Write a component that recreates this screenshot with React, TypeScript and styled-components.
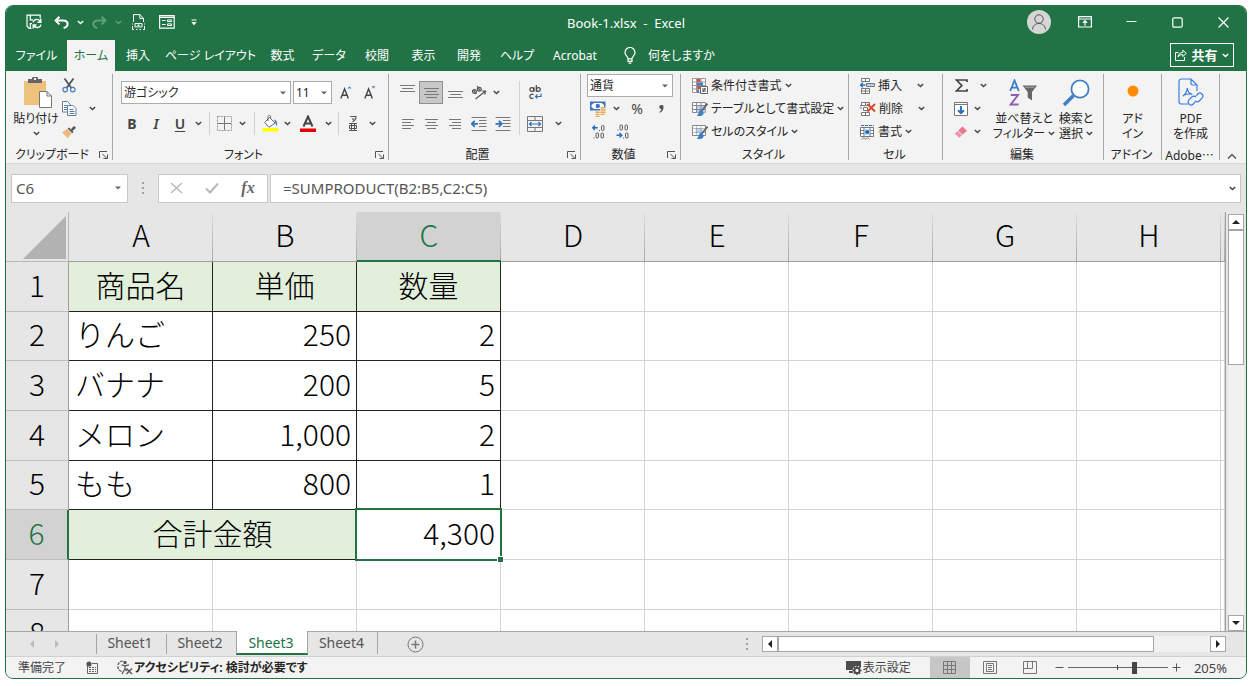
import React from "react";
import styled, { createGlobalStyle, css } from "styled-components";

const GREEN = "#217346";
const UI_FONT = '"Noto Sans", "Noto Sans CJK JP", sans-serif';
const CELL_FONT = '"Noto Sans CJK JP", sans-serif';

const GlobalStyle = createGlobalStyle`
  *, *::before, *::after { box-sizing: border-box; }
  body {
    margin: 0;
    background: #fff;
    color: #262626;
    font-family: ${UI_FONT};
    font-size: 12px;
    line-height: 16px;
    font-feature-settings: "palt";
  }
  button, input, select {
    margin: 0;
    padding: 0;
    border: 0;
    border-radius: 0;
    background: none;
    color: inherit;
    font: inherit;
    font-feature-settings: inherit;
  }
  svg { display: block; flex: none; }
`;

/* ---------- window frame ---------- */

const Page = styled.div`
  height: 100vh;
  padding: 5px 5px 7px;
`;

const Window = styled.div`
  display: flex;
  flex-direction: column;
  height: 100%;
  overflow: hidden;
  border: 1px solid ${GREEN};
  border-radius: 8px;
  background: #e6e6e6;
`;

const TitleBar = styled.header`
  display: grid;
  grid-template-columns: 1fr auto 1fr;
  align-items: center;
  height: 34px;
  background: ${GREEN};
  color: #fff;
`;

const QuickAccess = styled.div`
  display: flex;
  align-items: center;
  padding-left: 16px;
  padding-bottom: 2px;
`;

const TitleText = styled.h1`
  margin: 0;
  font-size: 13px;
  font-weight: 400;
  line-height: 16px;
  white-space: pre;
`;

const WindowControls = styled.div`
  display: flex;
  align-items: center;
  justify-content: flex-end;
  padding-bottom: 2px;
`;

const IconButton = styled.button<{ $w?: number; $h?: number; $on?: boolean; $dim?: boolean }>`
  display: flex;
  align-items: center;
  justify-content: center;
  flex: none;
  width: ${(p) => p.$w ?? 24}px;
  height: ${(p) => p.$h ?? 23}px;
  opacity: ${(p) => (p.$dim ? 0.3 : 1)};
  ${(p) =>
    p.$on &&
    css`
      border: 1px solid #8f8f8f;
      background: #c8c8c8;
    `}
`;

const Avatar = styled.span`
  display: grid;
  place-items: center;
  width: 24px;
  height: 24px;
  border-radius: 50%;
  background: #d6d6d6;
`;

/* ---------- tab strip ---------- */

const TabStrip = styled.nav`
  display: flex;
  align-items: stretch;
  height: 31px;
  background: ${GREEN};
  color: #fff;
`;

const RibbonTab = styled.button<{ $w: number; $active?: boolean }>`
  flex: none;
  display: flex;
  justify-content: center;
  align-items: center;
  width: ${(p) => p.$w}px;
  white-space: nowrap;
  ${(p) =>
    p.$active &&
    css`
      background: #f3f3f3;
      color: ${GREEN};
    `}
`;

const TellMe = styled.button`
  display: flex;
  align-items: center;
  gap: 12px;
  padding-left: 16px;
  white-space: nowrap;
`;

const ShareButton = styled.button`
  display: flex;
  align-items: center;
  justify-content: center;
  gap: 4px;
  width: 64px;
  height: 24px;
  margin: 3px 12px 0 auto;
  border: 1px solid #fff;
  font-size: 13px;
  font-weight: 700;
`;

/* ---------- ribbon ---------- */

const Ribbon = styled.section`
  display: flex;
  align-items: flex-start;
  height: 93px;
  padding-top: 3px;
  background: #f3f3f3;
  border-bottom: 1px solid #d6d6d6;
`;

const Group = styled.div<{ $w: number }>`
  display: flex;
  flex-direction: column;
  flex: none;
  width: ${(p) => p.$w}px;
  height: 89px;
`;

const GroupDivider = styled.span`
  flex: none;
  width: 1px;
  height: 86px;
  background: #a6a6a6;
`;

const GroupBody = styled.div<{ $pad?: string }>`
  display: flex;
  height: 73px;
  padding: ${(p) => p.$pad ?? "0"};
`;

const GroupLabel = styled.div`
  display: flex;
  align-items: center;
  height: 16px;
  padding-right: 2px;
  white-space: nowrap;
`;

const LabelText = styled.span`
  flex: 1;
  text-align: center;
`;

const Ellipsis = styled.span`
  font-family: ${CELL_FONT};
  font-feature-settings: normal;
`;

const CollapseButton = styled.button`
  align-self: flex-end;
  margin: 0 9px 3px auto;
`;

const Stack = styled.div<{ $gap?: number }>`
  display: flex;
  flex-direction: column;
  gap: ${(p) => p.$gap ?? 0}px;
`;

const Row = styled.div<{ $gap?: number }>`
  display: flex;
  align-items: center;
  gap: ${(p) => p.$gap ?? 0}px;
  height: 23px;
`;

const Rule = styled.span<{ $h?: number; $m?: string }>`
  flex: none;
  width: 1px;
  height: ${(p) => p.$h ?? 23}px;
  margin: ${(p) => p.$m ?? "0"};
  background: #d2d2d2;
`;

const BigButton = styled.button<{ $w: number }>`
  display: flex;
  flex-direction: column;
  align-items: center;
  justify-content: flex-start;
  flex: none;
  width: ${(p) => p.$w}px;
  height: 69px;
  white-space: nowrap;
`;

const BigIcon = styled.span`
  display: grid;
  place-items: center;
  height: 37px;
`;

const BigText = styled.span`
  display: flex;
  align-items: center;
  gap: 3px;
  height: 15px;
  line-height: 15px;
`;

const MenuButton = styled.button`
  display: flex;
  align-items: center;
  gap: 3px;
  height: 23px;
  white-space: nowrap;
`;

const MenuText = styled.span<{ $w?: number }>`
  min-width: ${(p) => p.$w ?? 0}px;
  text-align: left;
`;

const Glyph = styled.span<{ $weight?: number; $italic?: boolean; $underline?: boolean }>`
  color: #444;
  font-size: 14px;
  font-weight: ${(p) => p.$weight ?? 400};
  font-style: ${(p) => (p.$italic ? "italic" : "normal")};
  text-decoration: ${(p) => (p.$underline ? "underline" : "none")};
  text-underline-offset: 2px;
`;

const SelectBox = styled.div<{ $w: number }>`
  display: grid;
  flex: none;
  align-items: center;
  width: ${(p) => p.$w}px;
  height: 23px;
  border: 1px solid #ababab;
  background: #fff;

  & > * { grid-area: 1 / 1; }
  & > select {
    appearance: none;
    width: 100%;
    height: 21px;
    padding-left: 2px;
    outline: 0;
  }
  & > svg {
    justify-self: end;
    margin-right: 4px;
    pointer-events: none;
  }
`;

/* ---------- formula bar ---------- */

const FormulaBar = styled.section`
  display: flex;
  align-items: center;
  height: 48px;
  padding: 0 5px;
  color: #555;
`;

const FieldBox = styled.div<{ $w?: number }>`
  display: flex;
  align-items: center;
  flex: ${(p) => (p.$w ? "none" : "1")};
  width: ${(p) => (p.$w ? p.$w + "px" : "auto")};
  height: 29px;
  border: 1px solid #c8c8c8;
  background: #fff;
`;

const FormulaField = styled(FieldBox)`
  margin-left: 2px;
`;

const FieldInput = styled.input<{ $pad: number }>`
  flex: 1;
  min-width: 0;
  height: 27px;
  padding-left: ${(p) => p.$pad}px;
  outline: 0;
  font-size: 15px;
`;

const Grip = styled.span`
  flex: none;
  width: 2px;
  height: 12px;
  margin: 0 14px;
  background: repeating-linear-gradient(#a0a0a0 0 2px, transparent 2px 5px);
`;

/* ---------- sheet ---------- */

const Workspace = styled.main`
  display: flex;
  flex: 1;
  min-height: 0;
`;

const SheetView = styled.div`
  flex: 1;
  min-width: 0;
  overflow: hidden;
  border-right: 1px solid #a0a0a0;
  background: #fff;
`;

const Grid = styled.table`
  width: 100%;
  table-layout: fixed;
  border-collapse: separate;
  border-spacing: 0;
  font-family: ${CELL_FONT};
  font-size: 30px;
  font-weight: 300;
  line-height: 30px;
  font-feature-settings: normal;
  color: #000;

  tr { height: 50px; }
  tbody tr:nth-child(3n + 2) { height: 49px; }
`;

const RowHeadCol = styled.col`
  width: 63px;
`;

const DataCol = styled.col`
  width: 144px;
`;

const ColHead = styled.th<{ $active?: boolean }>`
  padding: 0 0 ${(p) => (p.$active ? 5 : 6)}px;
  font-weight: 300;
  border-bottom: ${(p) => (p.$active ? `2px solid ${GREEN}` : "1px solid #9e9e9e")};
  background: linear-gradient(#dcdcdc, #a8a8a8) right / 1px 100% no-repeat ${(p) => (p.$active ? "#d2d2d2" : "#e6e6e6")};
  color: ${(p) => (p.$active ? GREEN : "#000")};
`;

const Corner = styled.td`
  padding: 0 2px 2px 0;
  vertical-align: bottom;
  border-bottom: 1px solid #b8b8b8;
  border-right: 1px solid #b8b8b8;
  background: #e6e6e6;

  & > svg { margin-left: auto; }
`;

const RowHead = styled.th<{ $active?: boolean }>`
  padding: 0 0 6px;
  font-weight: 300;
  border-bottom: 1px solid #bdbdbd;
  border-right: ${(p) => (p.$active ? `2px solid ${GREEN}` : "1px solid #9e9e9e")};
  background: ${(p) => (p.$active ? "#d2d2d2" : "#e6e6e6")};
  color: ${(p) => (p.$active ? GREEN : "#000")};
`;

const Cell = styled.td<{ $kind?: "head" | "data"; $align?: string }>`
  position: relative;
  padding: ${(p) => (p.$align === "center" ? "0 0 6px" : "0 5px 6px 6px")};
  text-align: ${(p) => p.$align ?? "left"};
  white-space: nowrap;
  border-right: 1px solid ${(p) => (p.$kind ? "#222" : "#d4d4d4")};
  border-bottom: 1px solid ${(p) => (p.$kind ? "#222" : "#d4d4d4")};
  background: ${(p) => (p.$kind === "head" ? "#e2efda" : "#fff")};
`;

const Selection = styled.span`
  position: absolute;
  z-index: 1;
  inset: -2px;
  border: 2px solid ${GREEN};
  pointer-events: none;

  &::after {
    content: "";
    position: absolute;
    right: -3px;
    bottom: -3px;
    width: 6px;
    height: 6px;
    border: 1px solid #fff;
    border-width: 1px 0 0 1px;
    background: ${GREEN};
  }
`;

const VScroll = styled.div`
  display: flex;
  flex-direction: column;
  flex: none;
  width: 16px;
  margin: 2px 2px 0;
`;

const HScroll = styled.div`
  display: flex;
  width: 38%;
  height: 16px;
`;

const ScrollTrack = styled.div`
  display: flex;
  flex-direction: inherit;
  flex: 1;
  background: #f1f1f1;
`;

const ScrollThumb = styled.div<{ $size: string }>`
  flex: 0 0 ${(p) => p.$size};
  border: 1px solid #a6a6a6;
  background: #fff;
`;

const ScrollButton = styled.button`
  display: grid;
  place-items: center;
  flex: none;
  width: 16px;
  height: 16px;
  border: 1px solid #a6a6a6;
  background: #fff;
`;

/* ---------- sheet tabs ---------- */

const SheetBar = styled.nav`
  display: flex;
  align-items: center;
  height: 26px;
  padding-right: 20px;
  border-top: 1px solid #a6a6a6;
  border-bottom: 1px solid #d0d0d0;
`;

const SheetNav = styled.div`
  display: flex;
  width: 90px;
  padding-left: 13px;
`;

const SheetTabs = styled.div`
  display: flex;
  align-items: flex-start;
  align-self: stretch;
`;

const SheetTab = styled.button<{ $active?: boolean }>`
  width: ${(p) => (p.$active ? 72 : 70)}px;
  height: 22px;
  padding-right: 2px;
  font-size: 14px;
  line-height: 20px;
  color: #555;
  background: linear-gradient(#a6a6a6, #a6a6a6) left 2px / 1px 100% no-repeat;

  &:last-of-type { border-right: 1px solid #a6a6a6; }
  ${(p) =>
    p.$active &&
    css`
      height: 24px;
      margin-top: -1px;
      padding-top: 2px;
      border: 1px solid #a6a6a6;
      border-top: 0;
      border-bottom: 2px solid ${GREEN};
      background: #fff;
      color: ${GREEN};
      & + button { background: none; }
    `}
`;

const AddSheet = styled.button`
  margin: 0 auto 0 29px;
`;

/* ---------- status bar ---------- */

const StatusBar = styled.footer`
  display: flex;
  align-items: center;
  height: 21px;
  padding: 0 19px 0 12px;
  background: #f3f3f3;
  color: #444;
  white-space: nowrap;
`;

const StatusItem = styled.button<{ $m?: string; $bold?: boolean }>`
  display: flex;
  align-items: center;
  gap: 1px;
  margin: ${(p) => p.$m ?? "0"};
  font-weight: ${(p) => (p.$bold ? 700 : 400)};
  color: ${(p) => (p.$bold ? "#262626" : "inherit")};
`;

const ViewButton = styled.button<{ $active?: boolean }>`
  display: grid;
  place-items: center;
  width: 40px;
  height: 21px;
  background: ${(p) => (p.$active ? "#c6c6c6" : "none")};
`;

const ZoomRange = styled.input`
  appearance: none;
  width: 100px;
  height: 15px;
  outline: 0;
  background:
    linear-gradient(#444, #444) 49px center / 1px 5px no-repeat,
    linear-gradient(#666, #666) center / 100% 1px no-repeat;

  &::-webkit-slider-thumb {
    appearance: none;
    width: 5px;
    height: 12px;
    background: #444;
  }
`;

const ZoomValue = styled.span`
  font-size: 13px;
`;

/* ---------- small drawings ---------- */

const Chevron = ({ color = "#444" }: { color?: string }) => (
  <svg width="7" height="5" viewBox="0 0 7 5" fill="none" stroke={color} strokeWidth="1.4">
    <path d="M0.8 0.9 3.5 3.6 6.2 0.9" />
  </svg>
);

const Caret = () => (
  <svg width="6" height="4" viewBox="0 0 6 4">
    <path d="M0 0.5h6L3 3.5z" fill="#666" />
  </svg>
);

const Drop = ({ w = 16, label, white, dim }: { w?: number; label: string; white?: boolean; dim?: boolean }) => (
  <IconButton $w={w} $dim={dim} aria-label={label}>
    <Chevron color={white ? "#fff" : "#444"} />
  </IconButton>
);

const Launcher = ({ label }: { label: string }) => (
  <IconButton $w={12} $h={12} aria-label={label}>
    <svg width="10" height="10" viewBox="0 0 10 10" fill="none" stroke="#555">
      <path d="M0.5 8V1.5H8M3.5 4 8 8.5M8.5 4.5v4h-4" />
    </svg>
  </IconButton>
);

const SaveIcon = () => (
  <svg width="16" height="16" viewBox="0 0 16 16" fill="none" stroke="#fff" strokeWidth="1.2">
    <path d="M5.5 14.4H3.2L1 12.2V1.2h13.2v3.2M4.3 1.4v4.4H7M4.3 14V9.6H6" />
    <path d="M7 8.2a4 4 0 0 1 7.4-.6M14.8 4.8v3.4h-3.4M15 10.6a4 4 0 0 1-7.4.8M7.2 14.4V11h3.3" strokeWidth="1.4" />
  </svg>
);

const UndoIcon = ({ flip }: { flip?: boolean }) => (
  <svg width="15" height="13" viewBox="0 0 15 13" fill="none" stroke="#fff" strokeWidth="2">
    <g transform={flip ? "translate(15 0) scale(-1 1)" : undefined}>
      <path d="M5.4 0.8 1.6 4.6l3.8 3.8M1.8 4.6H9c2.8 0 4.6 1.5 4.6 3.5 0 2-1.6 3.5-4 3.8" />
    </g>
  </svg>
);

const PrintDocIcon = () => (
  <svg width="13" height="16" viewBox="0 0 13 16" fill="none" stroke="#fff">
    <path d="M1.5 8V0.6h6.4l3.6 3.6V8M7.8 0.8v3.6h3.6" />
    <path d="M0.5 9.5v1M0.5 12v3.5H2M12.5 9.5v1M12.5 12v3.5H11M4 15.5h1.5M7.5 15.5H9" />
    <path d="M3 9.5h7v3.4H3z" />
    <path d="M5.5 11.2h2" strokeWidth="1.6" />
  </svg>
);

const FormIcon = () => (
  <svg width="16" height="14" viewBox="0 0 16 14" fill="none" stroke="#fff">
    <path d="M0.6 0.6h14.6v12.6H0.6zM0.6 2.4h14.6" strokeWidth="1.2" />
    <path d="M3 5.5h3.6M3 9.5h3.6M8.5 4.9h4v1.6h-4zM8.5 8.9h4v1.6h-4z" />
  </svg>
);

const CustomizeIcon = () => (
  <svg width="6" height="7" viewBox="0 0 6 7">
    <path d="M0.5 0.5h5v1h-5zM0.3 3h5.4L3 6.2z" fill="#fff" />
  </svg>
);

const PersonIcon = () => (
  <svg width="16" height="18" viewBox="0 0 16 18" fill="none" stroke="#555">
    <circle cx="8" cy="6" r="4.2" />
    <path d="M1.5 16.5c.4-4 3-6 6.5-6s6.1 2 6.5 6" />
  </svg>
);

const RibbonModeIcon = () => (
  <svg width="14" height="12" viewBox="0 0 14 12" fill="none" stroke="#fff" strokeWidth="1.2">
    <path d="M0.6 0.7h12.8V11H0.6zM0.6 3h12.8M7 9.8V5M4.8 6.8 7 4.6l2.2 2.2" />
  </svg>
);

const MinIcon = () => (
  <svg width="11" height="11" viewBox="0 0 11 11" stroke="#fff">
    <path d="M0.5 4.5h10" />
  </svg>
);

const MaxIcon = () => (
  <svg width="11" height="11" viewBox="0 0 11 11" fill="none" stroke="#fff" strokeWidth="1.2">
    <rect x="0.8" y="0.8" width="9.4" height="9.4" rx="1.2" />
  </svg>
);

const CloseIcon = () => (
  <svg width="11" height="11" viewBox="0 0 11 11" stroke="#fff" strokeWidth="1.2">
    <path d="M0.5 0.5l10 10M10.5 0.5l-10 10" />
  </svg>
);

const BulbIcon = () => (
  <svg width="12" height="17" viewBox="0 0 12 17" fill="none" stroke="#fff" strokeWidth="1.2">
    <path d="M4 11.8C4 9.5 1 8.6 1 5.5a5 5 0 0 1 10 0c0 3.1-3 4-3 6.3zM4 11.8v2.6h4v-2.6M4.6 16.2h2.8" />
  </svg>
);

const ShareIcon = () => (
  <svg width="12" height="12" viewBox="0 0 12 12" fill="none" stroke="#fff">
    <path d="M3.5 3.5h-3v8h9V8" />
    <path d="M3 8c.3-3 2-4.5 4.8-4.5V1.2L11.3 4.4 7.8 7.5V5.6C5.6 5.5 4 6.2 3 8z" />
  </svg>
);

const PasteIcon = () => (
  <svg width="32" height="31" viewBox="0 0 32 31">
    <path d="M4 4h22v24H4z" fill="#edc27c" />
    <path d="M8 2h4a3 3 0 0 1 6 0h4v4H8z" fill="#666" />
    <rect x="14" y="1" width="2" height="2" fill="#f3f3f3" />
    <path d="M19.5 14.5H27l4.5 4.5v11.5h-12zM27 14.5V19h4.5" fill="#fff" stroke="#777" />
  </svg>
);

const CutIcon = () => (
  <svg width="14" height="15" viewBox="0 0 14 15" fill="none">
    <path d="M2.5 0.5 9.4 10M11.5 0.5 4.6 10" stroke="#555" strokeWidth="1.8" />
    <circle cx="3.2" cy="11.6" r="2.3" stroke="#4a7ebb" strokeWidth="1.2" />
    <circle cx="10.8" cy="11.6" r="2.3" stroke="#4a7ebb" strokeWidth="1.2" />
  </svg>
);

const CopyIcon = () => (
  <svg width="15" height="15" viewBox="0 0 15 15" fill="#fff" stroke="#6b7c93">
    <path d="M0.5 0.5h5L8 3v8H0.5z" />
    <path d="M2 4.5h3M2 6.5h3M2 8.5h3" stroke="#4a7ebb" />
    <path d="M5.5 4.5H11L14 7.5v7H5.5z" />
    <path d="M7.5 8.5h4M7.5 10.5h5M7.5 12.5h5" stroke="#4a7ebb" />
  </svg>
);

const BrushIcon = () => (
  <svg width="14" height="12" viewBox="0 0 14 12">
    <path d="M0 6.5 5 3l4.5 4.5L5.8 12z" fill="#edb877" />
    <path d="M5.6 2.6 7 1.4l4.6 4.7-1.4 1.2z" fill="#555" />
    <path d="M8.8 3.2 12 0l2 1.8-3.4 3.2z" fill="#555" />
  </svg>
);

const FontSizeIcon = ({ up }: { up?: boolean }) => (
  <svg width="14" height="15" viewBox="0 0 14 15" fill="none">
    <path d="M1.8 13.5 5.6 4l3.8 9.5M3.2 10.3H8" stroke="#444" strokeWidth="1.4" />
    <path d={up ? "M8.5 3.5 10.5 1.2l2 2.3z" : "M8.5 1.2l2 2.3 2-2.3z"} fill="#4a7ebb" />
  </svg>
);

const BorderIcon = () => (
  <svg width="15" height="15" viewBox="0 0 15 15" fill="none" stroke="#999">
    <path d="M0.5 0.5h14v14H0.5z" strokeDasharray="2 1" />
    <path d="M7.5 1v13M1 7.5h13" stroke="#777" />
  </svg>
);

const FillIcon = () => (
  <svg width="17" height="17" viewBox="0 0 17 17" fill="none">
    <path d="M7.5 2.5 13 8 7 12.2 2.6 7.6zM6 6V1.5c0-1.3 2.6-1.3 2.6 0V4" stroke="#666" fill="#fff" />
    <path d="M12 4.5c3 .5 3.5 3.5 3 6.5-1.4-.8-1.5-3-2-4z" fill="#4a7ebb" />
    <path d="M0.5 13h16v3.5h-16z" fill="#ff0" />
  </svg>
);

const FontColorIcon = () => (
  <svg width="16" height="18" viewBox="0 0 16 18" fill="none">
    <path d="M3.5 11.5 8 1.5l4.5 10M5.2 8.5h5.6" stroke="#444" strokeWidth="2" />
    <path d="M0 13.5h16V17H0z" fill="#e60000" />
  </svg>
);

const RubyIcon = () => (
  <svg width="10" height="17" viewBox="0 0 10 17" fill="none" stroke="#555">
    <path d="M2 1.5h6c0 2.5-1.5 4.300-3.500 5.300M5 3v2" strokeWidth="1.2" />
    <path d="M1 8.5h8M1 15.5h8M3.5 8.5v7M6.5 8.5v7M1.5 10.5h7v3h-7z" />
  </svg>
);

const Lines = ({ rows, top = 4 }: { rows: [number, number][]; top?: number }) => (
  <svg width="15" height="17" viewBox="0 0 15 17" fill="#777">
    {rows.map(([x, w], i) => (
      <rect key={i} x={x} y={top + i * 3} width={w} height="1" />
    ))}
  </svg>
);

const OrientationIcon = () => (
  <svg width="16" height="15" viewBox="0 0 16 15" fill="none" stroke="#555" strokeWidth="1.2">
    <circle cx="3.4" cy="6.5" r="1.9" />
    <path d="M5.2 8.8 2.3 4.8M6 1l3.4 4.8" />
    <circle cx="8.3" cy="4.2" r="1.9" />
    <path d="M4.5 14 14 6.5M10.8 6h3.7l-.7 3.5" />
  </svg>
);

const WrapIcon = () => (
  <svg width="13" height="15" viewBox="0 0 13 15" fill="none" stroke="#444" strokeWidth="1.2">
    <circle cx="2.8" cy="4.5" r="1.9" />
    <path d="M5 2.2v4.6M7.3 0v6.7" />
    <circle cx="9.4" cy="4.5" r="1.9" />
    <path d="M4.5 9.6C2.5 8.6.8 9.6.8 11.3s1.7 2.7 3.7 1.7" />
    <path d="M12 8.5v3H6.5M8.5 9.3l-2 2.1 2 2.1" stroke="#2f6fc0" />
  </svg>
);

const IndentIcon = ({ right }: { right?: boolean }) => (
  <svg width="16" height="14" viewBox="0 0 16 14" fill="none">
    <path d="M0.5 0.5h15M8 3.5h7.5M8 6.5h7.5M8 9.5h7.5M0.5 13.5h15" stroke="#777" />
    <path d={right ? "M0.5 6.8h6M3.8 3.8l3 3-3 3" : "M1 6.8h6M3.8 3.8l-3 3 3 3"} stroke="#2f6fc0" strokeWidth="1.8" />
  </svg>
);

const MergeIcon = () => (
  <svg width="16" height="16" viewBox="0 0 16 16" fill="none" stroke="#777">
    <path d="M0.5 0.5h15v15H0.5zM0.5 4.5h15M0.5 11.5h15M8 0.5v4M8 11.5v4" />
    <path d="M2.5 8h11M4.5 6l-2 2 2 2M11.5 6l2 2-2 2" stroke="#2f6fc0" strokeWidth="1.2" />
  </svg>
);

const CurrencyIcon = () => (
  <svg width="16" height="16" viewBox="0 0 16 16" fill="none">
    <path d="M0 0.5h15.5v9H0z" fill="#4472c4" />
    <path d="M4 2h7.5L14 4v2l-2.500 2H4L1.500 6V4z" fill="#fff" />
    <circle cx="7.8" cy="5" r="2.2" fill="#4472c4" />
    <path d="M10 6h6v10H5v-5.500h5z" fill="#f3f3f3" />
    <path d="M10.5 6.8h5M10.5 9h5M10.5 11.2h5M5.5 11.2h4M5.5 13.4h4M10.5 13.4h4M5.5 15.4h4" stroke="#e8a94c" strokeWidth="1.4" />
  </svg>
);

const CommaIcon = () => (
  <svg width="5" height="8" viewBox="0 0 5 8">
    <path d="M2.3 0a2 2 0 0 1 2.2 2.2C4.5 4.8 3 6.9.8 7.7L.4 6.9C1.6 6.2 2.3 5.3 2.4 4.1 1 4.2.3 3.3.3 2.1.3.9 1.2 0 2.3 0z" fill="#555" />
  </svg>
);

const DecimalIcon = ({ inc }: { inc?: boolean }) => (
  <svg width="13" height="15" viewBox="0 0 13 15" fill="none" stroke="#555">
    {inc ? (
      <>
        <path d="M0.8 3.8h5M3 1.6.8 3.8 3 6" stroke="#2f6fc0" strokeWidth="1.5" />
        <rect x="9.5" y="1.5" width="2.5" height="5" rx="1.2" />
        <rect x="4" y="9" width="2.5" height="5" rx="1.2" />
        <rect x="9" y="9" width="2.5" height="5" rx="1.2" />
        <path d="M7 6.5h1M1.5 14h1" />
      </>
    ) : (
      <>
        <rect x="4" y="1" width="2.5" height="5" rx="1.2" />
        <rect x="9" y="1" width="2.5" height="5" rx="1.2" />
        <path d="M1.5 6h1M7 14h1" />
        <path d="M0.5 11.3h5M3.5 9l2.3 2.3-2.3 2.2" stroke="#2f6fc0" strokeWidth="1.5" />
        <rect x="9.5" y="9" width="2.5" height="5" rx="1.2" />
      </>
    )}
  </svg>
);

const CondFormatIcon = () => (
  <svg width="16" height="16" viewBox="0 0 16 16" fill="none">
    <path d="M0.5 0.5h13v14h-13zM0.5 4h13M0.5 7.5h13M0.5 11h13M4.5 0.5v14M9 0.5v14" fill="#fff" stroke="#999" />
    <path d="M5 1h3.5v3H5zM5 8h3.5v3H5z" fill="#d9534f" />
    <path d="M5 4.5h6v3H5zM5 11.5h2v3H5z" fill="#4a7ebb" />
    <path d="M8.5 8.5h7v7h-7z" fill="#fff" stroke="#666" />
    <path d="M10 11h4M10 13h4M13 9.8l-2 4.4" stroke="#555" />
  </svg>
);

const TableStyleIcon = ({ solid }: { solid?: boolean }) => (
  <svg width="16" height="16" viewBox="0 0 16 16" fill="none">
    <path d="M0.5 1.5h13v10h-13z" fill="#fff" stroke="#888" />
    <path d={solid ? "M3.5 4h7v5h-7z" : "M4.5 4.5h9v7h-9z"} fill="#b9d3ee" />
    <path d="M0.5 4.5h13M0.5 8.5h13M4.5 1.5v10M9 1.5v10" stroke="#888" strokeOpacity={solid ? 0.5 : 1} />
    <path d="M15.5 2.5 10 9.5" stroke="#666" strokeWidth="2" />
    <path d="M10.5 9c-2-.5-3.5.5-3.8 2.5-.3 1.6-1 2.5-2 3.2 3 .8 6.3.2 7-2.5z" fill="#3f7fc4" />
  </svg>
);

const InsertCellIcon = () => (
  <svg width="15" height="16" viewBox="0 0 15 16" fill="none" stroke="#777">
    <path d="M1.5 0.5h8v3h-8zM5.5 0.5v3M1.5 10.5h8v5h-8zM5.5 10.5v5M1.5 13h8" fill="#fff" />
    <path d="M6.5 5.5h8v3h-8z" fill="#b9d3ee" />
    <path d="M0.5 7h5M2.8 4.8.6 7l2.2 2.2" stroke="#2f6fc0" strokeWidth="1.4" />
  </svg>
);

const DeleteCellIcon = () => (
  <svg width="16" height="16" viewBox="0 0 16 16" fill="none" stroke="#777">
    <path d="M1.5 1.5h8v3h-8zM5.5 1.5v3M1.5 11.5h8v3h-8zM5.5 11.5v3M3.5 6.5h4v3h-4z" fill="#fff" />
    <path d="M0 4.5h2M0 7h2" stroke="#4a7ebb" />
    <path d="M7.5 3 15 10.5M15 3 7.5 10.5" stroke="#d9432f" strokeWidth="1.9" />
  </svg>
);

const FormatCellIcon = () => (
  <svg width="15" height="16" viewBox="0 0 15 16" fill="none" stroke="#777">
    <path d="M1 1.5h13" stroke="#2f6fc0" strokeDasharray="3 1" />
    <path d="M0.5 3.5h13v9h-13zM0.5 6.5h13M0.5 9.5h13M4 3.5v9M10 3.5v9" fill="#fff" />
    <path d="M4 5.5h6.5v5H4z" fill="#9cc0e8" stroke="none" />
    <path d="M5.5 6.500H9v3H5.5z" fill="#1f5fae" stroke="none" />
    <path d="M1.5 15.5c1.5-2 3-2 4 0 1-2 3-2 4 0" />
  </svg>
);

const SigmaIcon = () => (
  <svg width="13" height="13" viewBox="0 0 13 13" fill="none" stroke="#444" strokeWidth="1.7">
    <path d="M12 3V1H1.5l5.3 5.5L1.5 12H12v-2" />
  </svg>
);

const FillDownIcon = () => (
  <svg width="14" height="14" viewBox="0 0 14 14" fill="none">
    <path d="M0.5 0.5h13v13H0.5zM0.5 2.5h13" stroke="#777" fill="#fff" />
    <path d="M7 4v7M4 8.2l3 3 3-3" stroke="#2f6fc0" strokeWidth="2" />
  </svg>
);

const EraserIcon = () => (
  <svg width="14" height="12" viewBox="0 0 14 12">
    <path d="M8.5 0.5 13 4.8 8.5 8.8 4.2 4.6z" fill="#e8798f" />
    <path d="M3.6 5.1 8 9.3 5.2 11.8 0.8 7.6z" fill="#ee94a6" />
  </svg>
);

const SortFilterIcon = () => (
  <svg width="30" height="28" viewBox="0 0 30 28" fill="none">
    <path d="M1.2 12 5.5 1.5 9.8 12M2.8 8.6h5.4" stroke="#3f7fc4" strokeWidth="1.9" />
    <path d="M1.8 16H9L1.8 25.5h7.8" stroke="#8e5bb5" strokeWidth="1.9" />
    <path d="M13.5 6.5H28L23 13v8.5l-4.3-3V13z" fill="#666" />
    <path d="M16 8.2h9" stroke="#aaa" />
  </svg>
);

const FindIcon = () => (
  <svg width="28" height="28" viewBox="0 0 28 28" fill="none">
    <circle cx="18" cy="10" r="8.6" stroke="#3f7fc4" strokeWidth="1.8" fill="#fff" />
    <path d="M11.5 16.5 2 26" stroke="#3f7fc4" strokeWidth="3.6" />
  </svg>
);

const DotIcon = () => (
  <svg width="14" height="18" viewBox="0 0 14 18">
    <circle cx="7" cy="7" r="5.5" fill="#ff8c00" />
  </svg>
);

const PdfIcon = () => (
  <svg width="26" height="29" viewBox="0 0 26 29" fill="none" stroke="#3b7de0" strokeWidth="1.2">
    <path d="M10 26H3.5C2 26 1 25 1 23.5v-20C1 2 2 1 3.5 1H13l6 6v6M13 1v4.5C13 6.5 13.7 7 14.5 7H19" />
    <path d="M4.8 18.2c2.4-2 4.3-5.2 4.5-8.2M9.3 10c.2 3 2.2 5.6 5 6.4M5.5 17.3c2.4-1.2 5-1.7 8.5-1.4" />
    <path d="M18 17.8l1.8-1.8a2.9 2.9 0 0 1 4.2 4.2L21.2 23a2.9 2.9 0 0 1-4.2 0" />
    <path d="M17 24.2l-1.8 1.8a2.9 2.9 0 0 1-4.2-4.2l2.8-2.8a2.9 2.9 0 0 1 4.2 0" />
  </svg>
);

const CollapseIcon = () => (
  <svg width="10" height="7" viewBox="0 0 10 7" fill="none" stroke="#444" strokeWidth="1.2">
    <path d="M1 5.5 5 1.5l4 4" />
  </svg>
);

const CancelIcon = () => (
  <svg width="13" height="12" viewBox="0 0 13 12" stroke="#b8b8b8" strokeWidth="1.5">
    <path d="M1 1l11 10M12 1 1 11" />
  </svg>
);

const EnterIcon = () => (
  <svg width="14" height="12" viewBox="0 0 14 12" fill="none" stroke="#b8b8b8" strokeWidth="2">
    <path d="M1 6.5 5 10.5 13 1.5" />
  </svg>
);

const FxText = styled.span`
  font-family: "Liberation Serif", serif;
  font-size: 16px;
  font-style: italic;
  font-weight: 700;
  color: #666;
`;

const ARROWS = { up: "M0 6h8L4 2z", down: "M0 2h8L4 6z", left: "M6 0v8L2 4z", right: "M2 0v8l4-4z" };

const Arrow = ({ dir, color = "#222" }: { dir: keyof typeof ARROWS; color?: string }) => (
  <svg width="8" height="8" viewBox="0 0 8 8">
    <path d={ARROWS[dir]} fill={color} />
  </svg>
);

const PlusCircleIcon = () => (
  <svg width="17" height="17" viewBox="0 0 17 17" fill="none" stroke="#777">
    <circle cx="8.5" cy="8.5" r="7.5" />
    <path d="M8.5 4.5v8M4.5 8.5h8" strokeWidth="1.5" />
  </svg>
);

const MacroIcon = () => (
  <svg width="13" height="13" viewBox="0 0 13 13" fill="none" stroke="#666">
    <path d="M1.5 4v8.5h10v-10H6M3 6.5h2M6 6.5h2M9 6.5h1M3 8.5h2M6 8.5h2M9 8.5h1M3 10.5h2M6 10.5h2M9 10.5h1" />
    <circle cx="3" cy="3" r="2.6" fill="#555" stroke="none" />
  </svg>
);

const AccessIcon = () => (
  <svg width="16" height="15" viewBox="0 0 16 15" fill="none" stroke="#555" strokeWidth="1.2">
    <path d="M6 1C3 1 .8 3.5.8 6.3c0 2.6 1.6 4.6 4 5.3" strokeDasharray="3 1" />
    <circle cx="8" cy="2.5" r="1.1" fill="#555" />
    <path d="M4.5 4.8 8 5.8l4-1M8 5.8v3L5 14M8 9l2 2" />
    <path d="M9.5 8.5 15 14M15 8.5 9.5 14" strokeWidth="1.4" />
  </svg>
);

const DisplayIcon = () => (
  <svg width="16" height="15" viewBox="0 0 16 15" fill="none">
    <path d="M0 1h15v9H0zM3 13h5v-2H3z" fill="#4d4d4d" />
    <circle cx="11" cy="10.5" r="4.5" fill="#f3f3f3" />
    <circle cx="11" cy="10.5" r="2.6" stroke="#444" strokeWidth="1.8" />
    <path d="M11 6v1.5M11 13.5V15M6.5 10.5H8M14 10.5h1.5M7.8 7.3l1 1M13.2 12.7l1 1M14.2 7.3l-1 1M8.8 12.7l-1 1" stroke="#444" strokeWidth="1.3" />
  </svg>
);

const NormalViewIcon = () => (
  <svg width="13" height="13" viewBox="0 0 13 13" fill="none" stroke="#777">
    <path d="M0.5 0.5h12v12H0.5zM0.5 4.5h12M0.5 8.5h12M4.5 0.5v12M8.5 0.5v12" />
  </svg>
);

const PageViewIcon = () => (
  <svg width="14" height="13" viewBox="0 0 14 13" fill="none" stroke="#777">
    <path d="M0.5 0.5h13v12H0.5zM3.5 2.5h7v8h-7zM5 4.5h4M5 6.5h4M5 8.5h4" />
  </svg>
);

const BreakViewIcon = () => (
  <svg width="14" height="13" viewBox="0 0 14 13" fill="none" stroke="#777">
    <path d="M0.5 0.5h13v12H0.5zM4.5 0.5v7M9.5 0.5v7M0.5 7.5h9" />
  </svg>
);

const ZoomSign = ({ plus }: { plus?: boolean }) => (
  <svg width="9" height="9" viewBox="0 0 9 9" stroke="#555">
    <path d={plus ? "M0.5 4.5h8M4.5 0.5v8" : "M0.5 4.5h8"} />
  </svg>
);

/* ---------- data ---------- */

const TABS: { label: string; w: number; active?: boolean }[] = [
  { label: "ファイル", w: 61 },
  { label: "ホーム", w: 48, active: true },
  { label: "挿入", w: 46 },
  { label: "ページ レイアウト", w: 99 },
  { label: "数式", w: 45 },
  { label: "データ", w: 48 },
  { label: "校閲", w: 48 },
  { label: "表示", w: 45 },
  { label: "開発", w: 46 },
  { label: "ヘルプ", w: 50 },
  { label: "Acrobat", w: 66 },
];

const COLUMNS = ["A", "B", "C", "D", "E", "F", "G", "H"];
const EMPTY_AFTER_C = ["D", "E", "F", "G", "H", "rest"];

const ITEMS = [
  ["りんご", "250", "2"],
  ["バナナ", "200", "5"],
  ["メロン", "1,000", "2"],
  ["もも", "800", "1"],
];

const EmptyCells = ({ keys }: { keys: string[] }) => (
  <>
    {keys.map((k) => (
      <Cell key={k} />
    ))}
  </>
);

/* ---------- ribbon groups ---------- */

const GroupFrame = ({ w, label, pad, launcher, children }: {
  w: number;
  label: React.ReactNode;
  pad?: string;
  launcher?: string;
  children: React.ReactNode;
}) => (
  <>
    <Group $w={w}>
      <GroupBody $pad={pad}>{children}</GroupBody>
      <GroupLabel>
        <LabelText>{label}</LabelText>
        {launcher && <Launcher label={launcher} />}
      </GroupLabel>
    </Group>
    <GroupDivider />
  </>
);

const RibbonGroups = () => (
  <Ribbon>
    <GroupFrame w={106} label="クリップボード" pad="0 0 0 4px" launcher="クリップボードの設定">
      <BigButton $w={52}>
        <BigIcon><PasteIcon /></BigIcon>
        <BigText>貼り付け</BigText>
        <BigText><Chevron /></BigText>
      </BigButton>
      <Stack>
        <Row><IconButton $w={14} aria-label="切り取り"><CutIcon /></IconButton></Row>
        <Row $gap={8}>
          <IconButton $w={14} aria-label="コピー"><CopyIcon /></IconButton>
          <Drop label="コピーのオプション" />
        </Row>
        <Row><IconButton $w={14} aria-label="書式のコピー"><BrushIcon /></IconButton></Row>
      </Stack>
    </GroupFrame>

    <GroupFrame w={275} label="フォント" pad="7px 0 0 8px" launcher="フォントの設定">
      <Stack $gap={8}>
        <Row $gap={2}>
          <SelectBox $w={170}>
            <select aria-label="フォント名"><option>游ゴシック</option></select>
            <Caret />
          </SelectBox>
          <SelectBox $w={39}>
            <select aria-label="フォント サイズ"><option>11</option></select>
            <Caret />
          </SelectBox>
          <IconButton aria-label="フォント サイズの拡大"><FontSizeIcon up /></IconButton>
          <IconButton $w={20} aria-label="フォント サイズの縮小"><FontSizeIcon /></IconButton>
        </Row>
        <Row>
          <IconButton $w={22} aria-label="太字"><Glyph $weight={700}>B</Glyph></IconButton>
          <IconButton $w={26} aria-label="斜体"><Glyph $weight={600} $italic>I</Glyph></IconButton>
          <IconButton $w={22} aria-label="下線"><Glyph $weight={600} $underline>U</Glyph></IconButton>
          <Drop w={14} label="下線の種類" />
          <Rule $m="0 2px 0 4px" />
          <IconButton aria-label="罫線"><BorderIcon /></IconButton>
          <Drop w={12} label="罫線の種類" />
          <Rule $m="0 3px 0 6px" />
          <IconButton aria-label="塗りつぶしの色"><FillIcon /></IconButton>
          <Drop w={10} label="塗りつぶしの色の一覧" />
          <IconButton $w={32} aria-label="フォントの色"><FontColorIcon /></IconButton>
          <Drop w={8} label="フォントの色の一覧" />
          <Rule $m="0 2px 0 6px" />
          <IconButton aria-label="ふりがな"><RubyIcon /></IconButton>
          <Drop w={14} label="ふりがなの設定" />
        </Row>
      </Stack>
    </GroupFrame>

    <GroupFrame w={191} label="配置" pad="7px 0 0 6px" launcher="配置の設定">
      <Stack $gap={8}>
        <Row>
          <IconButton aria-label="上揃え"><Lines top={1} rows={[[0, 15], [2, 11], [0, 15]]} /></IconButton>
          <IconButton $on aria-label="上下中央揃え"><Lines rows={[[0, 15], [2, 11], [0, 15], [2, 11]]} /></IconButton>
          <IconButton aria-label="下揃え"><Lines top={7} rows={[[0, 15], [2, 11], [0, 15]]} /></IconButton>
          <IconButton aria-label="方向"><OrientationIcon /></IconButton>
          <Drop w={10} label="方向の一覧" />
        </Row>
        <Row>
          <IconButton aria-label="左揃え"><Lines rows={[[2, 12], [2, 9], [2, 12], [2, 9]]} /></IconButton>
          <IconButton aria-label="中央揃え"><Lines rows={[[1, 13], [3, 9], [1, 13], [3, 9]]} /></IconButton>
          <IconButton aria-label="右揃え"><Lines rows={[[1, 12], [4, 9], [1, 12], [4, 9]]} /></IconButton>
          <IconButton aria-label="インデントを減らす"><IndentIcon /></IconButton>
          <IconButton aria-label="インデントを増やす"><IndentIcon right /></IconButton>
        </Row>
      </Stack>
      <Rule $h={54} $m="0 3px 0 4px" />
      <Stack $gap={8}>
        <Row><IconButton aria-label="折り返して全体を表示する"><WrapIcon /></IconButton></Row>
        <Row $gap={4}>
          <IconButton aria-label="セルを結合して中央揃え"><MergeIcon /></IconButton>
          <Drop w={14} label="セルの結合の一覧" />
        </Row>
      </Stack>
    </GroupFrame>

    <GroupFrame w={99} label="数値" pad="0 0 0 6px" launcher="表示形式の設定">
      <Stack>
        <SelectBox $w={86}>
          <select aria-label="表示形式"><option>通貨</option></select>
          <Caret />
        </SelectBox>
        <Row>
          <IconButton $w={22} aria-label="通貨表示形式"><CurrencyIcon /></IconButton>
          <Drop w={14} label="通貨の一覧" />
          <IconButton $w={28} aria-label="パーセント スタイル"><Glyph>%</Glyph></IconButton>
          <IconButton $w={20} aria-label="桁区切りスタイル"><CommaIcon /></IconButton>
        </Row>
        <Row>
          <IconButton $w={22} aria-label="小数点以下の表示桁数を増やす"><DecimalIcon inc /></IconButton>
          <IconButton $w={26} aria-label="小数点以下の表示桁数を減らす"><DecimalIcon /></IconButton>
        </Row>
      </Stack>
    </GroupFrame>

    <GroupFrame w={167} label="スタイル" pad="0 0 0 11px">
      <Stack>
        <MenuButton><CondFormatIcon /><MenuText>条件付き書式</MenuText><Chevron /></MenuButton>
        <MenuButton><TableStyleIcon /><MenuText>テーブルとして書式設定</MenuText><Chevron /></MenuButton>
        <MenuButton><TableStyleIcon solid /><MenuText>セルのスタイル</MenuText><Chevron /></MenuButton>
      </Stack>
    </GroupFrame>

    <GroupFrame w={93} label="セル" pad="0 0 0 11px">
      <Stack>
        <MenuButton><InsertCellIcon /><MenuText $w={36}>挿入</MenuText><Chevron /></MenuButton>
        <MenuButton><DeleteCellIcon /><MenuText $w={36}>削除</MenuText><Chevron /></MenuButton>
        <MenuButton><FormatCellIcon /><MenuText>書式</MenuText><Chevron /></MenuButton>
      </Stack>
    </GroupFrame>

    <GroupFrame w={160} label="編集" pad="0 0 0 8px">
      <Stack>
        <Row $gap={6}><IconButton $w={20} aria-label="合計"><SigmaIcon /></IconButton><Drop w={12} label="合計の一覧" /></Row>
        <Row><IconButton $w={20} aria-label="フィル"><FillDownIcon /></IconButton><Drop w={12} label="フィルの一覧" /></Row>
        <Row><IconButton $w={20} aria-label="クリア"><EraserIcon /></IconButton><Drop w={12} label="クリアの一覧" /></Row>
      </Stack>
      <BigButton $w={70}>
        <BigIcon><SortFilterIcon /></BigIcon>
        <BigText>並べ替えと</BigText>
        <BigText>フィルター<Chevron /></BigText>
      </BigButton>
      <BigButton $w={34}>
        <BigIcon><FindIcon /></BigIcon>
        <BigText>検索と</BigText>
        <BigText>選択<Chevron /></BigText>
      </BigButton>
    </GroupFrame>

    <GroupFrame w={57} label="アドイン">
      <BigButton $w={57}>
        <BigIcon><DotIcon /></BigIcon>
        <BigText>アド</BigText>
        <BigText>イン</BigText>
      </BigButton>
    </GroupFrame>

    <GroupFrame w={57} label={<>Adobe<Ellipsis lang="ja">…</Ellipsis></>}>
      <BigButton $w={57}>
        <BigIcon><PdfIcon /></BigIcon>
        <BigText>PDF</BigText>
        <BigText>を作成</BigText>
      </BigButton>
    </GroupFrame>

    <CollapseButton aria-label="リボンを折りたたむ"><CollapseIcon /></CollapseButton>
  </Ribbon>
);

/* ---------- page ---------- */

export default function App() {
  return (
    <Page>
      <GlobalStyle />
      <Window>
        <TitleBar>
          <QuickAccess>
            <IconButton aria-label="上書き保存"><SaveIcon /></IconButton>
            <IconButton $w={30} aria-label="元に戻す"><UndoIcon /></IconButton>
            <Drop w={8} label="元に戻す履歴" white />
            <IconButton $w={30} $dim aria-label="やり直し"><UndoIcon flip /></IconButton>
            <Drop w={8} label="やり直し履歴" white dim />
            <IconButton $w={32} aria-label="印刷プレビュー"><PrintDocIcon /></IconButton>
            <IconButton $w={26} aria-label="フォーム"><FormIcon /></IconButton>
            <IconButton $w={28} aria-label="クイック アクセスのカスタマイズ"><CustomizeIcon /></IconButton>
          </QuickAccess>
          <TitleText>{"Book-1.xlsx  -  Excel"}</TitleText>
          <WindowControls>
            <IconButton $w={46} aria-label="アカウント"><Avatar><PersonIcon /></Avatar></IconButton>
            <IconButton $w={46} aria-label="リボンの表示オプション"><RibbonModeIcon /></IconButton>
            <IconButton $w={46} aria-label="最小化"><MinIcon /></IconButton>
            <IconButton $w={46} aria-label="最大化"><MaxIcon /></IconButton>
            <IconButton $w={46} aria-label="閉じる"><CloseIcon /></IconButton>
          </WindowControls>
        </TitleBar>

        <TabStrip>
          {TABS.map((t) => (
            <RibbonTab key={t.label} $w={t.w} $active={t.active}>{t.label}</RibbonTab>
          ))}
          <TellMe><BulbIcon />何をしますか</TellMe>
          <ShareButton><ShareIcon />共有<Chevron color="#fff" /></ShareButton>
        </TabStrip>

        <RibbonGroups />

        <FormulaBar>
          <FieldBox $w={117}>
            <FieldInput $pad={4} aria-label="名前ボックス" defaultValue="C6" />
            <IconButton $w={18} aria-label="名前の一覧"><Caret /></IconButton>
          </FieldBox>
          <Grip />
          <FieldBox $w={110}>
            <IconButton $w={34} aria-label="キャンセル"><CancelIcon /></IconButton>
            <IconButton $w={38} aria-label="入力"><EnterIcon /></IconButton>
            <IconButton $w={34} aria-label="関数の挿入"><FxText>fx</FxText></IconButton>
          </FieldBox>
          <FormulaField>
            <FieldInput $pad={12} aria-label="数式バー" defaultValue="=SUMPRODUCT(B2:B5,C2:C5)" />
            <IconButton $w={16} aria-label="数式バーの展開"><Chevron /></IconButton>
          </FormulaField>
        </FormulaBar>

        <Workspace>
          <SheetView>
            <Grid>
              <colgroup>
                <RowHeadCol />
                {COLUMNS.map((c) => <DataCol key={c} />)}
                <col />
              </colgroup>
              <thead>
                <tr>
                  <Corner>
                    <svg width="43" height="43" viewBox="0 0 43 43">
                      <path d="M43 0v43H0z" fill="#b2b2b2" />
                    </svg>
                  </Corner>
                  {COLUMNS.map((c) => <ColHead key={c} scope="col" $active={c === "C"}>{c}</ColHead>)}
                  <ColHead as="td" />
                </tr>
              </thead>
              <tbody>
                <tr>
                  <RowHead scope="row">1</RowHead>
                  {["商品名", "単価", "数量"].map((h) => (
                    <Cell key={h} $kind="head" $align="center">{h}</Cell>
                  ))}
                  <EmptyCells keys={EMPTY_AFTER_C} />
                </tr>
                {ITEMS.map(([name, price, count], i) => (
                  <tr key={name}>
                    <RowHead scope="row">{i + 2}</RowHead>
                    <Cell $kind="data">{name}</Cell>
                    <Cell $kind="data" $align="right">{price}</Cell>
                    <Cell $kind="data" $align="right">{count}</Cell>
                    <EmptyCells keys={EMPTY_AFTER_C} />
                  </tr>
                ))}
                <tr>
                  <RowHead scope="row" $active>6</RowHead>
                  <Cell colSpan={2} $kind="head" $align="center">合計金額</Cell>
                  <Cell $kind="data" $align="right">4,300<Selection /></Cell>
                  <EmptyCells keys={EMPTY_AFTER_C} />
                </tr>
                {[7, 8].map((n) => (
                  <tr key={n}>
                    <RowHead scope="row">{n}</RowHead>
                    <EmptyCells keys={["A", "B", "C", ...EMPTY_AFTER_C]} />
                  </tr>
                ))}
              </tbody>
            </Grid>
          </SheetView>
          <VScroll>
            <ScrollButton aria-label="上へスクロール"><Arrow dir="up" /></ScrollButton>
            <ScrollTrack><ScrollThumb $size="35%" /></ScrollTrack>
            <ScrollButton aria-label="下へスクロール"><Arrow dir="down" /></ScrollButton>
          </VScroll>
        </Workspace>

        <SheetBar>
          <SheetNav>
            <IconButton $w={26} aria-label="前のシート"><Arrow dir="left" color="#bbb" /></IconButton>
            <IconButton $w={24} aria-label="次のシート"><Arrow dir="right" color="#bbb" /></IconButton>
          </SheetNav>
          <SheetTabs>
            {["Sheet1", "Sheet2", "Sheet3", "Sheet4"].map((s) => (
              <SheetTab key={s} $active={s === "Sheet3"}>{s}</SheetTab>
            ))}
          </SheetTabs>
          <AddSheet aria-label="新しいシート"><PlusCircleIcon /></AddSheet>
          <Grip />
          <HScroll>
            <ScrollButton aria-label="左へスクロール"><Arrow dir="left" /></ScrollButton>
            <ScrollTrack><ScrollThumb $size="87%" /></ScrollTrack>
            <ScrollButton aria-label="右へスクロール"><Arrow dir="right" /></ScrollButton>
          </HScroll>
        </SheetBar>

        <StatusBar>
          <span>準備完了</span>
          <StatusItem $m="0 18px 0 20px" aria-label="マクロの記録"><MacroIcon /></StatusItem>
          <StatusItem $bold><AccessIcon />アクセシビリティ: 検討が必要です</StatusItem>
          <StatusItem $m="0 19px 0 auto"><DisplayIcon />表示設定</StatusItem>
          <ViewButton $active aria-label="標準"><NormalViewIcon /></ViewButton>
          <ViewButton aria-label="ページ レイアウト表示"><PageViewIcon /></ViewButton>
          <ViewButton aria-label="改ページ プレビュー"><BreakViewIcon /></ViewButton>
          <StatusItem $m="0 4px 0 5px" aria-label="縮小"><ZoomSign /></StatusItem>
          <ZoomRange type="range" min={0} max={100} defaultValue={68} aria-label="ズーム" />
          <StatusItem $m="0 13px 0 4px" aria-label="拡大"><ZoomSign plus /></StatusItem>
          <ZoomValue>205%</ZoomValue>
        </StatusBar>
      </Window>
    </Page>
  );
}
